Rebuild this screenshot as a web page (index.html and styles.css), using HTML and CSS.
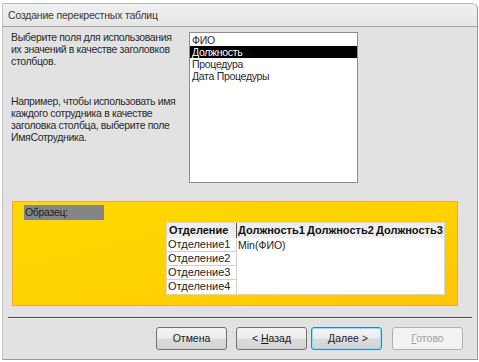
FILE: index.html
```html
<!DOCTYPE html>
<html lang="ru">
<head>
<meta charset="utf-8">
<title>Создание перекрестных таблиц</title>
<link rel="stylesheet" href="styles.css">
</head>
<body>
<div class="window">
  <div class="titlebar">Создание перекрестных таблиц</div>
  <div class="main">
    <div class="help">
      <p class="para">Выберите поля для использования<br>их значений в качестве заголовков<br>столбцов.</p>
      <p class="para para2">Например, чтобы использовать имя<br>каждого сотрудника в качестве<br>заголовка столбца, выберите поле<br>ИмяСотрудника.</p>
    </div>
    <div class="listbox">
      <div class="item">ФИО</div>
      <div class="item selected">Должность</div>
      <div class="item">Процедура</div>
      <div class="item">Дата Процедуры</div>
    </div>
  </div>
  <div class="sample">
    <div class="sample-label">Образец:</div>
    <div class="grid">
      <div class="hcell hfirst">Отделение</div>
      <div class="hcell hrest"><span class="hcol">Должность1</span><span class="hcol">Должность2</span><span class="hcol">Должность3</span></div>
      <div class="rows">
        <div class="rcell">Отделение1</div>
        <div class="rcell">Отделение2</div>
        <div class="rcell">Отделение3</div>
        <div class="rcell">Отделение4</div>
      </div>
      <div class="values">Min(ФИО)</div>
    </div>
  </div>
  <div class="separator"></div>
  <div class="buttons">
    <div class="btn">Отмена</div>
    <div class="btn gap-s">&lt; <u>Н</u>азад</div>
    <div class="btn default">&nbsp;<u>Д</u>алее &gt;</div>
    <div class="btn disabled gap-l"><u>Г</u>отово</div>
  </div>
</div>
</body>
</html>
```

FILE: styles.css
```css
* { box-sizing: border-box; }
html, body { margin: 0; padding: 0; }
body {
  background: #ffffff;
  font-family: "Liberation Sans", Arial, sans-serif;
  font-size: 11px;
  color: #1a1a1a;
}
.window {
  margin: 3px 0 0 2px;
  width: 476px;
  height: 357px;
  background: #e2e2e2;
  border: 1px solid #9a9a9a;
  border-top-color: #b8b8b8;
  border-left-color: #c4c4c4;
  border-radius: 0 6px 0 0;
  overflow: hidden;
}
.titlebar {
  height: 23px;
  background: linear-gradient(#f0f0f0, #e6e6e6);
  border-bottom: 1px solid #a4a4a4;
  padding-left: 5px;
  line-height: 22px;
  font-size: 10.5px;
  letter-spacing: -0.2px;
  color: #3a3a3a;
  white-space: nowrap;
}
.main {
  display: flex;
  height: 174px;
  padding: 4px 0 0 8px;
}
.help { width: 178px; }
.para {
  margin: 0;
  line-height: 12px;
  font-size: 10.5px;
  letter-spacing: -0.35px;
  white-space: nowrap;
  color: #2a2a2a;
}
.para2 { margin-top: 28px; }
.listbox {
  margin-top: 1px;
  width: 169px;
  height: 151px;
  background: #fff;
  border: 1px solid #8c8c8c;
  padding-top: 1px;
}
.item {
  height: 12px;
  line-height: 12px;
  padding-left: 2px;
  font-size: 10.5px;
  letter-spacing: -0.3px;
  color: #2a2a2a;
}
.item.selected {
  background: #000;
  color: #fff;
}
.sample {
  margin-left: 9px;
  width: 446px;
  height: 105px;
  border: 1px solid #f2a93a;
  background: linear-gradient(165deg, #ffd900 0%, #ffd200 55%, #ffc508 100%);
  padding: 3px 0 0 11px;
}
.sample-label {
  width: 80px;
  height: 15px;
  background: #858585;
  line-height: 14px;
  padding-left: 1px;
  font-size: 10.5px;
  letter-spacing: -0.3px;
  color: #1e1e1e;
}
.grid {
  margin: 2px 0 0 142px;
  width: 279px;
  display: grid;
  grid-template-columns: 70px 1fr;
  grid-template-rows: 15px 56px;
  background: #fff;
  border: 1px solid #d4d4d4;
}
.hcell {
  background: #ededed;
  font-weight: bold;
  line-height: 14px;
  color: #111;
}
.hfirst {
  padding-left: 2px;
  border-right: 1px solid #555;
}
.hrest { display: flex; }
.hcol { width: 69px; padding-left: 1px; }
.rows { display: flex; flex-direction: column; }
.rcell {
  height: 14px;
  line-height: 13px;
  border-bottom: 1px solid #cfcfcf;
  border-right: 1px solid #cfcfcf;
  padding-left: 1px;
  color: #222;
}
.rcell:last-child { border-bottom: none; }
.values {
  padding-left: 1px;
  line-height: 14px;
  font-size: 10.5px;
  color: #222;
}
.separator {
  margin: 11px 5px 0 5px;
  height: 2px;
  border-top: 1px solid #4c4c4c;
  border-bottom: 1px solid #f4f4f4;
}
.buttons {
  display: flex;
  justify-content: flex-end;
  padding: 8px 14px 0 0;
}
.btn {
  width: 71px;
  height: 23px;
  border: 1px solid #707070;
  border-radius: 3px;
  background: linear-gradient(#f4f4f4 0%, #ececec 48%, #dcdcdc 52%, #d2d2d2 100%);
  text-align: center;
  line-height: 21px;
  font-size: 10.5px;
  color: #1a1a1a;
}
.btn + .btn { margin-left: 4px; }
.btn.gap-s { margin-left: 9px; }
.btn.gap-l { margin-left: 10px; }
.btn.default {
  border-color: #3c7fb1;
  box-shadow: inset 0 0 0 1px #8fe0f5;
}
.btn.disabled {
  border-color: #b0b0b0;
  background: #f2f2f2;
  color: #a2a2a2;
}
```
